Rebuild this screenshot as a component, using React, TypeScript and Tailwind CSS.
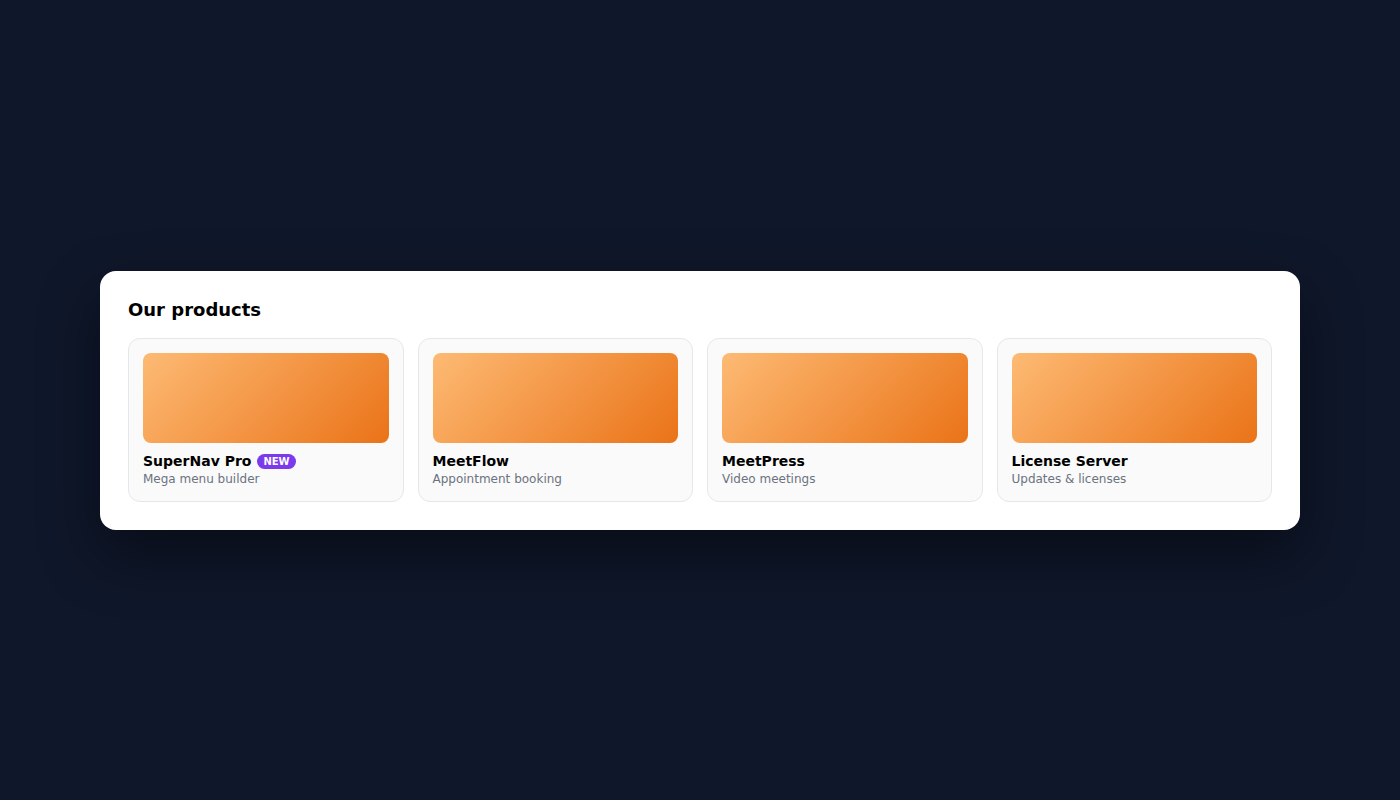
const products = [
  { name: 'SuperNav Pro', desc: 'Mega menu builder', isNew: true },
  { name: 'MeetFlow', desc: 'Appointment booking' },
  { name: 'MeetPress', desc: 'Video meetings' },
  { name: 'License Server', desc: 'Updates & licenses' },
];

export default function App() {
  return (
    <div
      className="flex min-h-screen items-center justify-center bg-[#0f172a]"
      style={{ fontFamily: '"DejaVu Sans", sans-serif' }}
    >
      <div className="w-[1200px] rounded-2xl bg-white p-7 shadow-[0_25px_60px_rgba(0,0,0,0.45)]">
        <h2 className="mb-[17px] text-[18px] font-bold leading-[22px] text-black">Our products</h2>
        <div className="grid grid-cols-4 gap-[14px]">
          {products.map((p) => (
            <div
              key={p.name}
              className="rounded-xl border border-[#e5e7eb] bg-[#fafafa] p-[14px]"
            >
              <div className="h-[90px] rounded-lg bg-[linear-gradient(135deg,#fdba74,#ea7317)]" />
              <div className="mt-[9px] flex items-center gap-[6px] text-[14px] font-bold leading-[19px] text-black">
                {p.name}
                {p.isNew && (
                  <span className="rounded-full bg-[#7c3aed] px-[6px] text-[10px] font-bold leading-[15px] text-white">
                    NEW
                  </span>
                )}
              </div>
              <div className="mt-[1px] text-[12px] leading-[15px] text-[#6b7280]">{p.desc}</div>
            </div>
          ))}
        </div>
      </div>
    </div>
  );
}
